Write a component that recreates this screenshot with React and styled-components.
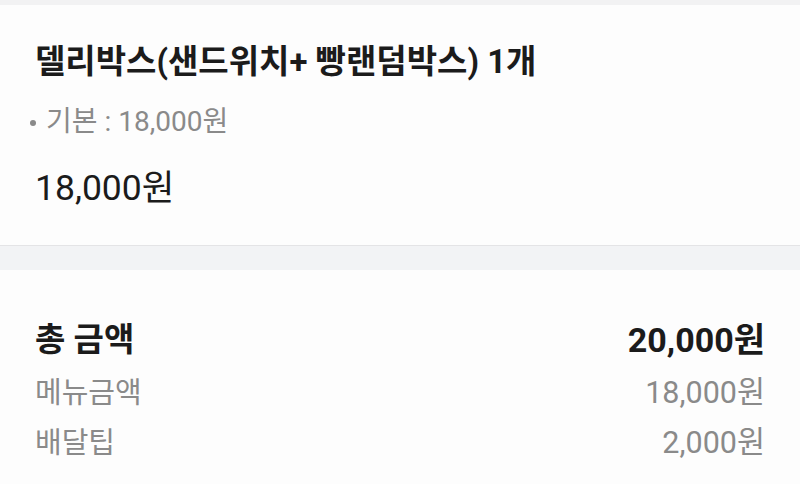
import React from "react";
import styled, { createGlobalStyle } from "styled-components";

const Global = createGlobalStyle`
  html, body { margin: 0; padding: 0; background: #f2f2f3; }
  body { font-family: Roboto, "Noto Sans CJK KR", sans-serif; }
`;

const Page = styled.div`
  width: 800px;
  height: 484px;
  overflow: hidden;
  display: flex;
  flex-direction: column;
  padding-top: 5px;
  box-sizing: border-box;
`;

const Card = styled.section`
  background: #fdfdfd;
  padding: ${(p) => p.$pad};
  display: flex;
  flex-direction: column;
  flex: ${(p) => (p.$grow ? 1 : "none")};
  border-bottom: ${(p) => (p.$border ? "1px solid #e4e4e6" : "none")};
`;

const Gap = styled.div`
  height: 24px;
  background: #f2f3f5;
`;

const Title = styled.h2`
  margin: 0;
  font-size: 33px;
  font-weight: 700;
  color: #1b1b1b;
  line-height: 44px;
`;

const Option = styled.div`
  margin-top: 20px;
  font-size: 28px;
  color: #8a8a8a;
  line-height: 36px;
  display: flex;
  align-items: center;
`;

const Dot = styled.span`
  width: 6px;
  height: 6px;
  border-radius: 50%;
  background: #8a8a8a;
  margin: 2px 10px 0 -5px;
`;

const Price = styled.div`
  margin-top: 26px;
  font-size: 35.5px;
  color: #1b1b1b;
  line-height: 44px;
`;

const Row = styled.div`
  display: flex;
  justify-content: space-between;
  align-items: center;
  font-size: ${(p) => (p.$total ? "33px" : "29px")};
  font-weight: ${(p) => (p.$total ? 700 : 400)};
  color: ${(p) => (p.$total ? "#1b1b1b" : "#8a8a8a")};
  line-height: ${(p) => (p.$total ? "44px" : "40px")};
  margin-top: ${(p) => p.$mt || "0px"};
`;

const Value = styled.span`
  font-size: ${(p) => (p.$total ? "34px" : "30.5px")};
`;

export default function App() {
  return (
    <>
      <Global />
      <Page>
        <Card $pad="35px 35px 35px 35px" $border>
          <Title>델리박스(샌드위치+ 빵랜덤박스) 1개</Title>
          <Option>
            <Dot />
            기본 : 18,000원
          </Option>
          <Price>18,000원</Price>
        </Card>
        <Gap />
        <Card $pad="48px 35px 20px 35px" $grow>
          <Row $total>
            <span>총 금액</span>
            <Value $total>20,000원</Value>
          </Row>
          <Row $mt="11px">
            <span>메뉴금액</span>
            <Value>18,000원</Value>
          </Row>
          <Row $mt="10px">
            <span>배달팁</span>
            <Value>2,000원</Value>
          </Row>
        </Card>
      </Page>
    </>
  );
}
